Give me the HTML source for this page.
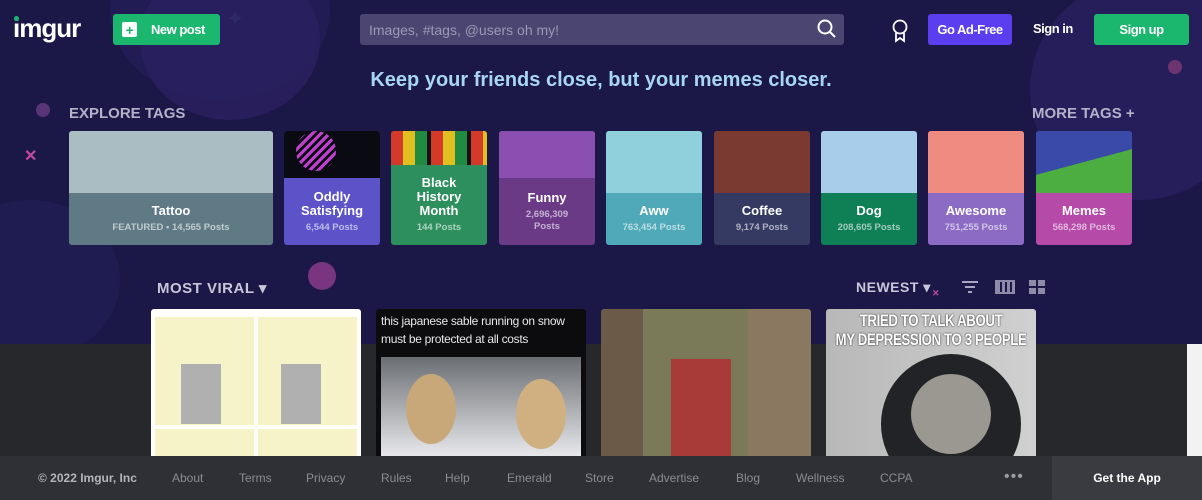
<!DOCTYPE html>
<html><head><meta charset="utf-8"><style>
*{margin:0;padding:0;box-sizing:border-box}
body{width:1202px;height:500px;overflow:hidden;background:#1b1847;font-family:"Liberation Sans",sans-serif;position:relative}
.abs{position:absolute}
.circ{position:absolute;border-radius:50%}
.btn{position:absolute;border-radius:3px;color:#fff;font-weight:bold;font-size:14px;display:flex;align-items:center;justify-content:center;letter-spacing:-0.5px}
.tile{position:absolute;top:131px;height:114px;border-radius:3px;overflow:hidden;color:#fff;text-align:center;font-weight:bold}
.tile .img{position:absolute;left:0;right:0;top:0}
.tile .bot{position:absolute;left:0;right:0;bottom:0;display:flex;flex-direction:column;justify-content:center;align-items:center}
.tile .n{font-size:13px;line-height:14px}
.tile .p{font-size:9.5px;opacity:.6;margin-top:4px;line-height:12px}
.foot a{position:absolute;top:471px;color:#8b8c92;font-size:12px;text-decoration:none}
.card{position:absolute;top:309px;height:147px;width:210px;border-radius:3px 3px 0 0;overflow:hidden}
</style></head><body>
<div class="circ" style="left:110px;top:-80px;width:220px;height:180px;background:#221c55"></div>
<div class="circ" style="left:140px;top:-40px;width:180px;height:160px;background:#2a2160;opacity:.8"></div>
<div class="circ" style="left:-60px;top:200px;width:180px;height:160px;background:#1f1c52"></div>
<div class="circ" style="left:1030px;top:-20px;width:220px;height:220px;background:#251e5a"></div>
<div class="circ" style="left:36px;top:103px;width:14px;height:14px;background:#5a3478"></div>
<div class="circ" style="left:1168px;top:60px;width:14px;height:14px;background:#6d3570"></div>
<div class="circ" style="left:308px;top:262px;width:28px;height:28px;background:#7a3580"></div>
<div class="abs" style="left:24px;top:146px;color:#c24aa0;font-size:16px;font-weight:bold">✕</div>
<div class="abs" style="left:226px;top:6px;color:#2e2a68;font-size:22px">✦</div>

<div class="abs" style="left:13px;top:13px;color:#fff;font-size:26px;font-weight:bold;letter-spacing:-1px">imgur</div>
<div class="circ" style="left:14px;top:16px;width:5px;height:5px;background:#1bb76e"></div>
<div class="btn" style="left:113px;top:14px;width:107px;height:31px;background:#1bb76e;justify-content:flex-start;padding-left:9px;font-size:13px"><span style="width:15px;height:15px;background:#fff;border-radius:2px;color:#1bb76e;display:inline-flex;align-items:center;justify-content:center;font-size:14px;margin-right:14px">+</span>New post</div>
<div class="abs" style="left:360px;top:14px;width:484px;height:31px;background:#4a4571;border-radius:3px;color:#9c98b6;font-size:14px;padding:8px 9px">Images, #tags, @users oh my!</div>
<svg class="abs" style="left:817px;top:19px" width="20" height="20" viewBox="0 0 20 20"><circle cx="8" cy="8" r="6.5" fill="none" stroke="#fff" stroke-width="2"/><path d="M13 13l5 5" stroke="#fff" stroke-width="2"/></svg>
<svg class="abs" style="left:891px;top:19px" width="18" height="24" viewBox="0 0 18 24"><circle cx="9" cy="8" r="6.5" fill="none" stroke="#fff" stroke-width="1.8"/><path d="M5 14v8l4-3 4 3v-8" fill="none" stroke="#fff" stroke-width="1.8"/></svg>
<div class="btn" style="left:928px;top:14px;width:84px;height:31px;background:#5b3ef0;font-size:13px">Go Ad-Free</div>
<div class="abs" style="left:1033px;top:21px;color:#fff;font-weight:bold;font-size:13px;letter-spacing:-0.5px">Sign in</div>
<div class="btn" style="left:1094px;top:14px;width:95px;height:31px;background:#1bb76e;font-size:13px">Sign up</div>

<div class="abs" style="left:0;width:1202px;top:69px;text-align:center;color:#a8d6f0;font-weight:bold;font-size:20px">Keep your friends close, but your memes closer.</div>
<div class="abs" style="left:69px;top:105px;color:#b4b2c8;font-weight:bold;font-size:15px">EXPLORE TAGS</div>
<div class="abs" style="left:1032px;top:105px;color:#b4b2c8;font-weight:bold;font-size:15px">MORE TAGS +</div>

<div class="tile" style="left:69px;width:204px;background:#5f7a85"><div class="img" style="height:62px;background:#a9bdc3"></div><div class="bot" style="top:62px"><div class="n">Tattoo</div><div class="p">FEATURED • 14,565 Posts</div></div></div>
<div class="tile" style="left:284px;width:96px;background:#5c53c9"><div class="img" style="height:47px;background:#0a0a12"><div class="circ" style="left:12px;top:0;width:40px;height:40px;background:repeating-linear-gradient(135deg,#c040d0 0 3px,#0a0a12 3px 6px)"></div></div><div class="bot" style="top:47px"><div class="n">Oddly<br>Satisfying</div><div class="p">6,544 Posts</div></div></div>
<div class="tile" style="left:391px;width:96px;background:#2e8f5e"><div class="img" style="height:34px;background:repeating-linear-gradient(90deg,#d43a2a 0 12px,#e0c020 12px 24px,#1f8a40 24px 36px,#111 36px 40px)"></div><div class="bot" style="top:34px"><div class="n">Black<br>History<br>Month</div><div class="p">144 Posts</div></div></div>
<div class="tile" style="left:499px;width:96px;background:#6a3a86"><div class="img" style="height:47px;background:#8a4fb0"></div><div class="bot" style="top:47px"><div class="n">Funny</div><div class="p">2,696,309<br>Posts</div></div></div>
<div class="tile" style="left:606px;width:96px;background:#4fa9b8"><div class="img" style="height:62px;background:#8fd0dc"></div><div class="bot" style="top:62px"><div class="n">Aww</div><div class="p">763,454 Posts</div></div></div>
<div class="tile" style="left:714px;width:96px;background:#353a63"><div class="img" style="height:62px;background:#7a3a32"></div><div class="bot" style="top:62px"><div class="n">Coffee</div><div class="p">9,174 Posts</div></div></div>
<div class="tile" style="left:821px;width:96px;background:#0f7f55"><div class="img" style="height:62px;background:#a8cdea"></div><div class="bot" style="top:62px"><div class="n">Dog</div><div class="p">208,605 Posts</div></div></div>
<div class="tile" style="left:928px;width:96px;background:#8b6bc4"><div class="img" style="height:62px;background:#f08b82"></div><div class="bot" style="top:62px"><div class="n">Awesome</div><div class="p">751,255 Posts</div></div></div>
<div class="tile" style="left:1036px;width:96px;background:#b54aa9"><div class="img" style="height:62px;background:linear-gradient(165deg,#3a4aa8 0 50%,#4cae40 50%)"></div><div class="bot" style="top:62px"><div class="n">Memes</div><div class="p">568,298 Posts</div></div></div>

<div class="abs" style="left:157px;top:279px;color:#c8c6da;font-weight:bold;font-size:15px;letter-spacing:.5px">MOST VIRAL ▾</div>
<div class="abs" style="left:856px;top:279px;color:#c8c6da;font-weight:bold;font-size:14px;letter-spacing:.5px">NEWEST ▾</div>
<div class="abs" style="left:932px;top:288px;color:#c24aa0;font-size:9px;font-weight:bold">✕</div>
<svg class="abs" style="left:961px;top:279px" width="18" height="16"><path d="M1 3h16M4 8h10M7 13h4" stroke="#a8a6c0" stroke-width="2"/></svg>
<div class="abs" style="left:995px;top:280px;width:20px;height:14px;border:2px solid #8d8ba8;background:repeating-linear-gradient(90deg,#8d8ba8 0 3px,#1b1847 3px 5px)"></div>
<svg class="abs" style="left:1029px;top:280px" width="16" height="15"><rect x="0" y="0" width="7" height="6" fill="#8d8ba8"/><rect x="9" y="0" width="7" height="6" fill="#8d8ba8"/><rect x="0" y="8" width="7" height="6" fill="#8d8ba8"/><rect x="9" y="8" width="7" height="6" fill="#8d8ba8"/></svg>

<div class="abs" style="left:0;top:344px;width:1202px;height:112px;background:#27282c"></div>
<div class="abs" style="left:1187px;top:344px;width:15px;height:112px;background:#f2f2f2"></div>

<div class="card" style="left:151px;background:#fff"><div class="abs" style="left:4px;top:8px;width:202px;height:140px;background:linear-gradient(90deg,#f7f3c8 0 49%,#fff 49% 51%,#f7f3c8 51%)"></div><div class="abs" style="left:4px;top:116px;width:202px;height:4px;background:#fff"></div><div class="abs" style="left:30px;top:55px;width:40px;height:60px;background:#b0b0b0"></div><div class="abs" style="left:130px;top:55px;width:40px;height:60px;background:#b0b0b0"></div></div>
<div class="card" style="left:376px;background:#0c0c0e"><div class="abs" style="left:5px;top:3px;color:#e8e8e8;font-size:12px;line-height:18px;letter-spacing:-0.3px">this japanese sable running on snow<br>must be protected at all costs</div><div class="abs" style="left:5px;top:48px;width:200px;height:99px;background:linear-gradient(180deg,#6a6e72,#e8e8ec)"></div><div class="circ" style="left:30px;top:65px;width:50px;height:70px;background:#c8a878"></div><div class="circ" style="left:140px;top:70px;width:50px;height:70px;background:#d0b080"></div></div>
<div class="card" style="left:601px;background:linear-gradient(90deg,#6b5a48 0 20%,#7b7a58 20% 70%,#8a7860 70%)"><div class="abs" style="left:70px;top:50px;width:60px;height:97px;background:#a83a38"></div></div>
<div class="card" style="left:826px;background:linear-gradient(90deg,#b8b8b8,#d0d0d0)"><div class="circ" style="left:55px;top:45px;width:140px;height:140px;background:#222326"></div><div class="circ" style="left:85px;top:65px;width:80px;height:80px;background:#9a9890"></div><div class="abs" style="left:-20px;width:250px;top:2px;text-align:center;color:#fff;font-weight:bold;font-size:17px;line-height:19px;letter-spacing:-0.5px;text-shadow:0 0 2px #000;white-space:nowrap;transform:scaleX(0.78)">TRIED TO TALK ABOUT<br>MY DEPRESSION TO 3 PEOPLE</div></div>

<div class="abs foot" style="left:0;top:456px;width:1202px;height:44px;background:#2f3035"></div>
<div class="abs" style="left:1052px;top:456px;width:150px;height:44px;background:#3a3b40;color:#fff;font-weight:bold;font-size:12px;display:flex;align-items:center;justify-content:center">Get the App</div>
<div class="foot">
<a style="left:38px;color:#b4b5ba;font-weight:bold">© 2022 Imgur, Inc</a>
<a style="left:172px">About</a><a style="left:239px">Terms</a><a style="left:306px">Privacy</a><a style="left:381px">Rules</a><a style="left:445px">Help</a><a style="left:507px">Emerald</a><a style="left:585px">Store</a><a style="left:649px">Advertise</a><a style="left:736px">Blog</a><a style="left:796px">Wellness</a><a style="left:880px">CCPA</a><a style="left:1004px;top:468px;font-size:16px;letter-spacing:1px;color:#9a9ba0">•••</a>
</div>
</body></html>
